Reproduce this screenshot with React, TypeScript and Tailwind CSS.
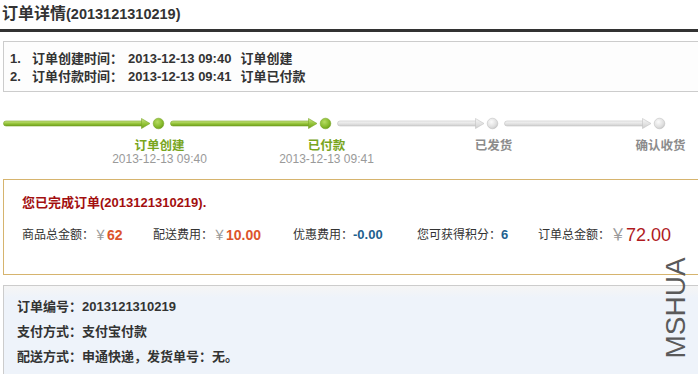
import React from "react";

function Step({ active, id }: { active: boolean; id: string }) {
  const top = active ? "#c9e584" : "#f7f7f7";
  const mid = active ? "#92c236" : "#e2e2e2";
  const bot = active ? "#6e9e1d" : "#cfcfcf";
  const stroke = active ? "#78a626" : "#c2c2c2";
  return (
    <svg width="167" height="15" viewBox="0 0 167 15" className="block shrink-0">
      <defs>
        <linearGradient id={`g${id}`} x1="0" y1="0" x2="0" y2="1">
          <stop offset="0" stopColor={top} />
          <stop offset="0.55" stopColor={mid} />
          <stop offset="1" stopColor={bot} />
        </linearGradient>
        <radialGradient id={`r${id}`} cx="0.4" cy="0.35" r="0.7">
          <stop offset="0" stopColor={active ? "#b6dc62" : "#fbfbfb"} />
          <stop offset="0.7" stopColor={active ? "#84b82a" : "#dedede"} />
          <stop offset="1" stopColor={active ? "#679a18" : "#c6c6c6"} />
        </radialGradient>
      </defs>
      <rect x="0.5" y="5" width="142" height="5" rx="2.5" fill={`url(#g${id})`} stroke={stroke} strokeWidth="0.6" />
      <polygon points="138.5,2.5 147,7.5 138.5,12.5" fill={`url(#g${id})`} stroke={stroke} strokeWidth="0.6" strokeLinejoin="round" />
      <circle cx="155.5" cy="7.5" r="5.3" fill={`url(#r${id})`} stroke={stroke} strokeWidth="0.6" />
    </svg>
  );
}

export default function App() {
  const steps = [
    { label: "订单创建", date: "2013-12-13 09:40", active: true },
    { label: "已付款", date: "2013-12-13 09:41", active: true },
    { label: "已发货", date: "", active: false },
    { label: "确认收货", date: "", active: false },
  ];
  return (
    <div className="relative w-[698px] h-[374px] overflow-hidden bg-white text-[#333] font-['Liberation_Sans','Noto_Sans_CJK_SC',sans-serif]">
      {/* Title */}
      <div className="h-[29px] pl-[2px] text-[16px] leading-[28px] font-bold text-[#333] whitespace-nowrap">
        订单详情<span className="text-[14.5px]">(2013121310219)</span>
      </div>
      <div className="h-[3px] bg-[#333]" />

      {/* Log box */}
      <div className="mt-[9px] ml-[3px] mr-[-6px] border border-[#cccccc] bg-[#fdfdfd] pt-[8px] pb-[5px] pl-[6px] text-[13px] leading-[18px] font-bold text-[#333] whitespace-nowrap">
        <div className="flex">
          <span className="w-[22px]">1.</span>
          <span>订单创建时间：</span>
          <span className="ml-[5px]">2013-12-13 09:40</span>
          <span className="ml-[9px]">订单创建</span>
        </div>
        <div className="flex">
          <span className="w-[22px]">2.</span>
          <span>订单付款时间：</span>
          <span className="ml-[5px]">2013-12-13 09:41</span>
          <span className="ml-[9px]">订单已付款</span>
        </div>
      </div>

      {/* Progress */}
      <div className="mt-[24px] pl-[3px] flex">
        {steps.map((s, i) => (
          <Step key={i} id={String(i)} active={s.active} />
        ))}
      </div>
      <div className="mt-[8px] pl-[76px] flex whitespace-nowrap">
        {steps.map((s, i) => (
          <div key={i} className="w-[167px] shrink-0 text-center">
            <div className={`text-[12.5px] leading-[14px] font-bold ${s.active ? "text-[#79a51d]" : "text-[#8c8c8c]"}`}>
              {s.label}
            </div>
            <div className="h-[13px] text-[12px] leading-[13px] text-[#9a9a9a]">{s.date}</div>
          </div>
        ))}
      </div>

      {/* Summary box */}
      <div className="mt-[13px] ml-[3px] mr-[-6px] h-[96px] border border-[#d6b46e] bg-white pt-[14px] pl-[18px] whitespace-nowrap">
        <div className="text-[13px] leading-[18px] font-bold text-[#a30f0f]">您已完成订单(2013121310219).</div>
        <div className="mt-[11px] flex items-center h-[24px] text-[12px] text-[#333]">
          <div className="w-[131px] shrink-0 flex items-center">
            <span>商品总金额：</span>
            <span className="text-[#999] text-[13px]">￥</span>
            <span className="text-[14px] font-bold text-[#dc552c]">62</span>
          </div>
          <div className="w-[140px] shrink-0 flex items-center">
            <span>配送费用：</span>
            <span className="text-[#999] text-[13px]">￥</span>
            <span className="text-[14px] font-bold text-[#dc552c]">10.00</span>
          </div>
          <div className="w-[124px] shrink-0 flex items-center">
            <span>优惠费用：</span>
            <span className="text-[13px] font-bold text-[#1e5f8f]">-0.00</span>
          </div>
          <div className="w-[121px] shrink-0 flex items-center">
            <span>您可获得积分：</span>
            <span className="text-[13px] font-bold text-[#1e5f8f]">6</span>
          </div>
          <div className="flex items-center">
            <span>订单总金额：</span>
            <span className="text-[#999] text-[16px]">￥</span>
            <span className="text-[18px] leading-[24px] text-[#b01a1e]">72.00</span>
          </div>
        </div>
      </div>

      {/* Info box */}
      <div className="mt-[10px] ml-[3px] mr-[-6px] h-[100px] border-l border-t border-[#cccccc] bg-[linear-gradient(#f5f5f5,#eef3fa_12px)] pt-[8px] pl-[13px] text-[13px] leading-[25px] font-bold text-[#333] whitespace-nowrap">
        <div>订单编号：2013121310219</div>
        <div>支付方式：支付宝付款</div>
        <div>配送方式：申通快递，发货单号：无。</div>
      </div>

      {/* Watermark */}
      <div className="absolute left-[625px] top-[294px] w-[102px] h-[28px] text-[28px] leading-[28px] text-[#5a5a5a] -rotate-90 text-center">
        MSHUA
      </div>
    </div>
  );
}
